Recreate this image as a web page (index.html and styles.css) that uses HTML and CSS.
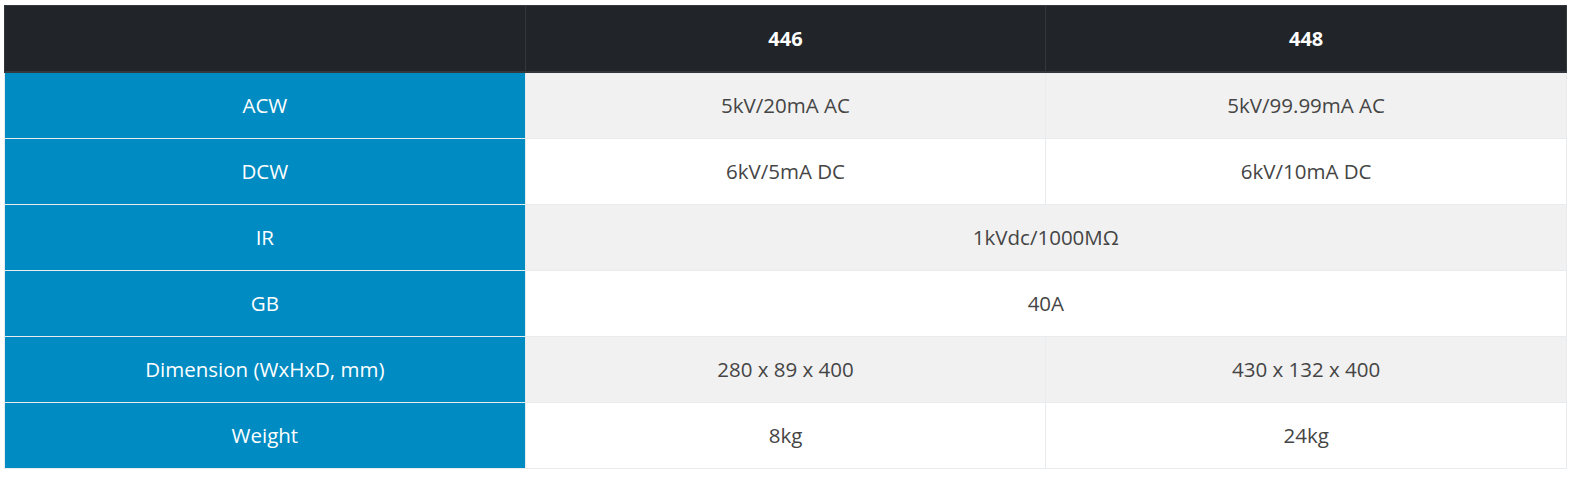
FILE: index.html
```html
<!DOCTYPE html>
<html>
<head>
<meta charset="utf-8">
<link rel="stylesheet" href="styles.css">
</head>
<body>
<table class="spec">
  <thead>
    <tr><th></th><th>446</th><th>448</th></tr>
  </thead>
  <tbody>
    <tr class="odd"><th>ACW</th><td>5kV/20mA AC</td><td>5kV/99.99mA AC</td></tr>
    <tr><th>DCW</th><td>6kV/5mA DC</td><td>6kV/10mA DC</td></tr>
    <tr class="odd"><th>IR</th><td colspan="2">1kVdc/1000MΩ</td></tr>
    <tr><th>GB</th><td colspan="2">40A</td></tr>
    <tr class="odd"><th>Dimension (WxHxD, mm)</th><td>280 x 89 x 400</td><td>430 x 132 x 400</td></tr>
    <tr><th>Weight</th><td>8kg</td><td>24kg</td></tr>
  </tbody>
</table>
</body>
</html>
```
FILE: styles.css
```css
html, body {
  margin: 0;
  padding: 0;
  background: #fff;
}
body {
  padding: 5px 0 0 4px;
  font-family: "Open Sans", "Noto Sans", sans-serif;
  font-size: 20.5px;
}
.spec {
  width: 1563px;
  border-collapse: collapse;
  table-layout: fixed;
  text-align: center;
}
.spec th, .spec td {
  padding: 0 12px;
  vertical-align: middle;
  font-weight: 400;
  line-height: 1.2;
}
.spec thead th {
  height: 65px;
  background: #212529;
  color: #fff;
  font-weight: 700;
  font-size: 20px;
  border: 1px solid #32383e;
  border-bottom: 2px solid #32383e;
}
.spec tbody tr {
  height: 66px;
}
.spec tbody th {
  background: #008bc2;
  color: #fff;
  border: 1px solid #e9ecef;
  border-top: 1px solid #fff;
  border-left-color: #e9ecef;
}
.spec tbody td {
  color: #454545;
  border: 1px solid #e9ecef;
  background: #fff;
}
.spec tbody tr.odd td {
  background: #f1f1f1;
}
```
